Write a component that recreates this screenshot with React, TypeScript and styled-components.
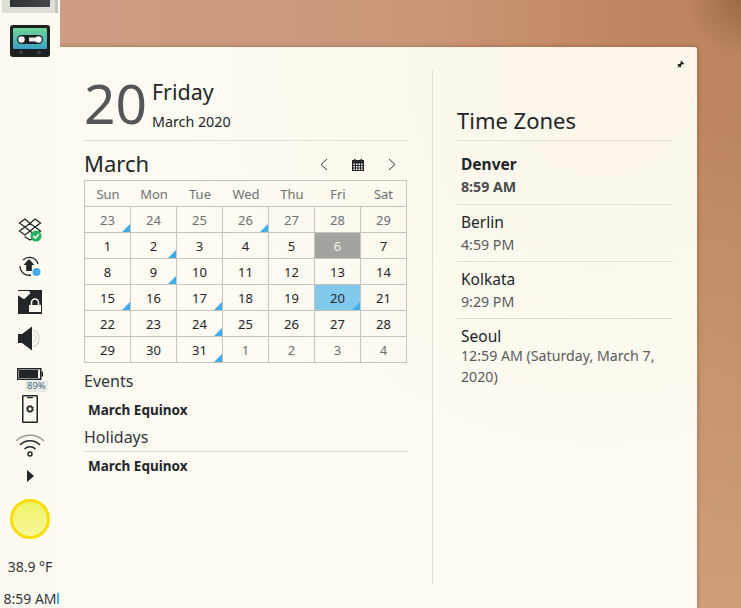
import React from 'react';
import styled, { createGlobalStyle } from 'styled-components';

const Global = createGlobalStyle`
  html, body { margin: 0; padding: 0; height: 100%; overflow: hidden; }
  #root { height: 100%; }
  body { font-family: "Noto Sans", "Liberation Sans", sans-serif; color: #232629; }
`;

const Desktop = styled.div`
  width: 741px;
  height: 608px;
  display: flex;
  overflow: hidden;
  background:
    radial-gradient(circle at 100% 0, #9c6a44 0, rgba(170, 115, 75, 0) 55px),
    linear-gradient(180deg, rgba(226, 180, 145, 0) 90px, rgba(226, 180, 145, 0.55) 100%),
    linear-gradient(90deg, #cf9f86 0%, #cc9779 55%, #bf8661 85%, #bb8460 100%);
`;

const Dock = styled.div`
  width: 60px;
  height: 608px;
  flex: none;
  position: relative;
  z-index: 1;
  background: #fcfaf1;
  display: flex;
  flex-direction: column;
  align-items: center;
`;

const Thumb = styled.div`
  width: 56px;
  height: 13px;
  flex: none;
  box-sizing: border-box;
  background: linear-gradient(90deg, #dfdfd8 0, #dfdfd8 53px, #c3c4c0 53px);
  padding: 0 8px 6px;
  display: flex;
`;

const ThumbScreen = styled.div`
  flex: 1;
  background: linear-gradient(90deg, #2d3238, #43484d);
`;

const Slot = styled.div<{ $top: number; $h: number }>`
  margin-top: ${p => p.$top}px;
  height: ${p => p.$h}px;
  flex: none;
  position: relative;
  display: flex;
  align-items: center;
  justify-content: center;
  svg { display: block; }
`;

const BatteryChip = styled.span`
  position: absolute;
  left: 8px;
  top: 12px;
  padding: 0 2px;
  height: 12px;
  line-height: 12px;
  font-size: 9.5px;
  color: #4a6a80;
  background: #e8ebe6;
  border-radius: 3px;
  white-space: nowrap;
`;

const DockText = styled.div<{ $top: number }>`
  margin-top: ${p => p.$top}px;
  font-size: 14px;
  line-height: 18px;
  color: #31363b;
  white-space: nowrap;
  position: relative;
`;

const ClockMark = styled.i`
  position: absolute;
  right: -2px;
  top: 3px;
  width: 2px;
  height: 11px;
  background: #3daee9;
`;

const Main = styled.div`
  flex: 1;
  padding: 47px 44px 0 0;
  display: flex;
`;

const Panel = styled.div`
  flex: 1;
  height: 561px;
  box-sizing: border-box;
  position: relative;
  background: radial-gradient(circle at 85% 5%, #fcf6ea 0, #fdfbf2 55%);
  border-radius: 0 3px 0 0;
  box-shadow: 0 0 4px rgba(80, 45, 15, 0.45);
  padding: 23px 24px 24px;
  display: flex;
`;

const PinIcon = styled.svg`
  position: absolute;
  top: 13px;
  right: 12px;
`;

const LeftCol = styled.div`
  width: 324px;
  flex: none;
  padding-right: 24px;
  border-right: 1px solid #e1dfd6;
`;

const DateHead = styled.div`
  height: 70px;
  display: flex;
  gap: 5px;
  border-bottom: 1px solid #dfddd4;
`;

const DayNumber = styled.div`
  font-size: 55px;
  line-height: 66px;
  font-weight: 400;
  color: #555657;
`;

const DayText = styled.div`
  display: flex;
  flex-direction: column;
`;

const Weekday = styled.div`
  font-size: 21.5px;
  line-height: 30px;
  margin-top: 7px;
`;

const MonthYear = styled.div`
  font-size: 14.3px;
  line-height: 20px;
  margin-top: 5px;
`;

const CalHead = styled.div`
  height: 39px;
  display: flex;
  align-items: center;
  justify-content: space-between;
`;

const MonthName = styled.div`
  font-size: 22px;
  line-height: 28px;
  margin-top: 4px;
`;

const CalNav = styled.div`
  display: flex;
  align-items: center;
  gap: 24px;
  margin-right: 11px;
  margin-top: 8px;
`;

const Grid = styled.div`
  width: 323px;
  box-sizing: border-box;
  display: grid;
  grid-template-columns: repeat(7, 1fr);
  grid-auto-rows: 26px;
  border: 1px solid #c5c3bb;
  border-width: 1px 0 0 1px;
`;

const HeadCell = styled.div`
  font-size: 13px;
  color: #6f7172;
  display: flex;
  align-items: center;
  justify-content: center;
  border-bottom: 1px solid #c5c3bb;
  &:nth-child(7) { border-right: 1px solid #c5c3bb; }
`;

const DayCell = styled.div<{ $dim?: boolean; $bg?: string; $light?: boolean }>`
  position: relative;
  font-size: 13px;
  display: flex;
  align-items: center;
  justify-content: center;
  border-right: 1px solid #c5c3bb;
  border-bottom: 1px solid #c5c3bb;
  color: ${p => (p.$light ? '#f1f0e6' : p.$dim ? '#6f7172' : '#232629')};
  background: ${p => p.$bg || 'transparent'};
`;

const EventMark = styled.i`
  position: absolute;
  right: 0;
  bottom: 0;
  width: 0;
  height: 0;
  border-style: solid;
  border-width: 0 0 8px 8px;
  border-color: transparent transparent #3daee9 transparent;
`;

const SectionTitle = styled.div<{ $line?: boolean; $top: number }>`
  font-size: 16px;
  line-height: 22px;
  margin-top: ${p => p.$top}px;
  color: #31363b;
  padding-bottom: ${p => (p.$line ? '3px' : '0')};
  border-bottom: ${p => (p.$line ? '1px solid #dfddd4' : 'none')};
`;

const EventName = styled.div<{ $top: number }>`
  font-size: 13.5px;
  font-weight: 700;
  line-height: 20px;
  padding: ${p => p.$top}px 0 0 4px;
`;

const RightCol = styled.div`
  flex: 1;
  padding-left: 24px;
  display: flex;
  flex-direction: column;
`;

const ZoneTitle = styled.div`
  font-size: 22px;
  line-height: 30px;
  margin-top: 35px;
  padding-bottom: 5px;
  border-bottom: 1px solid #dfddd4;
`;

const ZoneRow = styled.div<{ $first?: boolean; $last?: boolean }>`
  padding: ${p => (p.$first ? '12px 4px 5px' : '6px 4px 4px')};
  border-bottom: ${p => (p.$last ? 'none' : '1px solid #dfddd4')};
`;

const ZoneCity = styled.div<{ $bold?: boolean }>`
  font-size: 15.5px;
  line-height: 22px;
  font-weight: ${p => (p.$bold ? 700 : 400)};
`;

const ZoneTime = styled.div<{ $bold?: boolean; $wrap?: boolean }>`
  font-size: 14.2px;
  line-height: ${p => (p.$wrap ? '21px' : '24px')};
  margin-top: ${p => (p.$wrap ? '-2px' : '0')};
  font-weight: ${p => (p.$bold ? 700 : 400)};
  color: ${p => (p.$bold ? '#4a4c4e' : '#5a5b5c')};
`;

const weekdays = ['Sun', 'Mon', 'Tue', 'Wed', 'Thu', 'Fri', 'Sat'];

const days: { n: number; dim?: boolean; ev?: boolean; bg?: string; light?: boolean }[] = [
  { n: 23, dim: true, ev: true }, { n: 24, dim: true }, { n: 25, dim: true }, { n: 26, dim: true, ev: true },
  { n: 27, dim: true }, { n: 28, dim: true }, { n: 29, dim: true },
  { n: 1 }, { n: 2, ev: true }, { n: 3 }, { n: 4 }, { n: 5 }, { n: 6, bg: '#a3a49f', light: true }, { n: 7 },
  { n: 8 }, { n: 9, ev: true }, { n: 10 }, { n: 11 }, { n: 12 }, { n: 13 }, { n: 14 },
  { n: 15, ev: true }, { n: 16 }, { n: 17, ev: true }, { n: 18 }, { n: 19 }, { n: 20, ev: true, bg: '#82c9ee' }, { n: 21 },
  { n: 22 }, { n: 23 }, { n: 24, ev: true }, { n: 25 }, { n: 26 }, { n: 27 }, { n: 28 },
  { n: 29 }, { n: 30 }, { n: 31, ev: true }, { n: 1, dim: true }, { n: 2, dim: true }, { n: 3, dim: true }, { n: 4, dim: true },
];

const zones = [
  { city: 'Denver', time: '8:59 AM', bold: true },
  { city: 'Berlin', time: '4:59 PM' },
  { city: 'Kolkata', time: '9:29 PM' },
  { city: 'Seoul', time: '12:59 AM (Saturday, March 7, 2020)', wrap: true },
];

const Cassette = () => (
  <svg width="40" height="32" viewBox="0 0 40 32">
    <defs>
      <linearGradient id="tape" x1="0" y1="0" x2="0" y2="1">
        <stop offset="0" stopColor="#6fd49c" />
        <stop offset="1" stopColor="#3aa3c4" />
      </linearGradient>
    </defs>
    <rect width="40" height="32" rx="3" fill="#1d1f20" />
    <rect x="3" y="3" width="34" height="21" rx="1" fill="url(#tape)" />
    <rect x="7" y="10" width="26" height="9" rx="4.5" fill="#1d1f20" />
    <circle cx="11.5" cy="14.5" r="3.2" fill="#fff" />
    <circle cx="28.5" cy="14.5" r="3.2" fill="#fff" />
    <rect x="19" y="12.5" width="7" height="4" fill="#eee" />
    <circle cx="11" cy="27.5" r="2" fill="#3a3d3f" />
    <circle cx="29" cy="27.5" r="2" fill="#3a3d3f" />
  </svg>
);

const Dropbox = () => (
  <svg width="24" height="24" viewBox="0 0 24 24" fill="none" stroke="#232629" strokeWidth="1.3">
    <path d="M7 1 L1.5 5 L7 9 L12 5.5 Z M17 1 L22.5 5 L17 9 L12 5.5 Z M7 9 L1.5 13 L7 17 L12 13 Z M17 9 L22.5 13 L17 17 L12 13 Z M6.5 18.5 L12 22 L15 20" />
    <circle cx="18" cy="18" r="5.5" fill="#27ae60" stroke="none" />
    <path d="M15.3 18 L17.4 20 L20.8 16.2" stroke="#fff" strokeWidth="1.6" />
  </svg>
);

const SyncIcon = () => (
  <svg width="26" height="24" viewBox="0 0 26 24">
    <path d="M21 10 A9 9 0 0 0 6 6 M3 12 A9 9 0 0 0 14 21" fill="none" stroke="#232629" strokeWidth="1.3" />
    <path d="M12 5 L17.5 11 L14.8 11 L14.8 17 L9.2 17 L9.2 11 L6.5 11 Z" fill="#232629" />
    <circle cx="19.5" cy="18" r="4" fill="#3daee9" />
  </svg>
);

const LockIcon = () => (
  <svg width="24" height="24" viewBox="0 0 24 24">
    <path d="M0 0 H24 V24 H0 Z" fill="#232629" />
    <path d="M0 1 H11 L12.5 3.3 L6 9.3 L0 5.3 Z" fill="#fcfaf1" />
    <path d="M13.5 16 V12.5 A3.5 3.5 0 0 1 20.5 12.5 V16" fill="none" stroke="#fcfaf1" strokeWidth="1.6" />
    <rect x="11" y="15" width="12" height="7" fill="#fcfaf1" />
  </svg>
);

const Speaker = () => (
  <svg width="24" height="25" viewBox="0 0 24 25">
    <path d="M0 8 H4 L14 0.5 V24.5 L4 17 H0 Z" fill="#232629" />
    <path d="M15 4 A9 9 0 0 1 15 21" fill="none" stroke="#cfcfca" strokeWidth="1.2" />
    <path d="M15 8 A5 5 0 0 1 15 17" fill="none" stroke="#cfcfca" strokeWidth="1" />
  </svg>
);

const Battery = () => (
  <svg width="26" height="12" viewBox="0 0 26 12">
    <rect x="0.75" y="0.75" width="23" height="10.5" fill="none" stroke="#232629" strokeWidth="1.5" />
    <rect x="2" y="2" width="19" height="8" fill="#232629" />
    <rect x="24.5" y="3.5" width="1.5" height="5" fill="#232629" />
  </svg>
);

const Phone = () => (
  <svg width="16" height="28" viewBox="0 0 16 28">
    <rect x="0.75" y="0.75" width="14.5" height="26.5" rx="0.5" fill="none" stroke="#232629" strokeWidth="1.5" />
    <rect x="5" y="2" width="6" height="1.2" fill="#232629" />
    <circle cx="8" cy="14" r="2.4" fill="none" stroke="#232629" strokeWidth="1.5" />
    <circle cx="8" cy="14" r="3.6" fill="none" stroke="#232629" strokeWidth="1" strokeDasharray="1.4 1.4" />
  </svg>
);

const Wifi = () => (
  <svg width="30" height="25" viewBox="0 0 30 25" fill="none">
    <path d="M1 8 A20 20 0 0 1 29 8" stroke="#9a9a96" strokeWidth="1.4" />
    <path d="M5 12 A14 14 0 0 1 25 12" stroke="#232629" strokeWidth="1.5" />
    <path d="M9.5 16 A8 8 0 0 1 20.5 16" stroke="#232629" strokeWidth="1.5" />
    <circle cx="15" cy="21" r="2" stroke="#232629" strokeWidth="1.5" />
  </svg>
);

const Arrow = () => (
  <svg width="7" height="12" viewBox="0 0 7 12">
    <path d="M0 0 L7 6 L0 12 Z" fill="#232629" />
  </svg>
);

const Sun = () => (
  <svg width="40" height="40" viewBox="0 0 40 40">
    <defs>
      <linearGradient id="sun" x1="0" y1="0" x2="0" y2="1">
        <stop offset="0" stopColor="#eef264" />
        <stop offset="1" stopColor="#f7f89a" />
      </linearGradient>
    </defs>
    <circle cx="20" cy="20" r="18.5" fill="url(#sun)" stroke="#f9dc00" strokeWidth="3" />
  </svg>
);

const Chevron = ({ left }: { left?: boolean }) => (
  <svg width="9" height="13" viewBox="0 0 9 13" fill="none" stroke="#31363b" strokeWidth="1">
    <path d={left ? 'M8 1 L2 6.5 L8 12' : 'M1 1 L7 6.5 L1 12'} />
  </svg>
);

const CalendarIcon = () => (
  <svg width="12" height="12" viewBox="0 0 12 12">
    <path d="M0 1 H2 V0 H3.5 V1 H8.5 V0 H10 V1 H12 V12 H0 Z" fill="#232629" />
    <g fill="#fdfbf2">
      {[4.5, 7, 9.5].flatMap(y => [1.5, 4, 6.5, 9].map(x => <rect key={`${x}-${y}`} x={x} y={y} width="1.5" height="1.5" />))}
    </g>
  </svg>
);

const App: React.FC = () => (
  <Desktop>
    <Global />
    <Dock>
      <Thumb><ThumbScreen /></Thumb>
      <Slot $top={12} $h={32}><Cassette /></Slot>
      <Slot $top={161} $h={24}><Dropbox /></Slot>
      <Slot $top={12} $h={24}><SyncIcon /></Slot>
      <Slot $top={12} $h={24}><LockIcon /></Slot>
      <Slot $top={12} $h={25}><Speaker /></Slot>
      <Slot $top={17} $h={12}><Battery /><BatteryChip>89%</BatteryChip></Slot>
      <Slot $top={15} $h={28}><Phone /></Slot>
      <Slot $top={10} $h={25}><Wifi /></Slot>
      <Slot $top={12} $h={12}><Arrow /></Slot>
      <Slot $top={17} $h={40}><Sun /></Slot>
      <DockText $top={19}>38.9 °F</DockText>
      <DockText $top={14}>8:59 AM<ClockMark /></DockText>
    </Dock>
    <Main>
      <Panel>
        <PinIcon width="9" height="9" viewBox="0 0 9 9">
          <path d="M5 0.5 L8.5 4 L7.5 4.5 L6.5 4 L5 5.5 L5 7 L4 7.5 L1.5 5 L2 4 L3.5 4 L5 2.5 L4.5 1.5 Z M2.5 6 L0.5 8.5 L3 6.5 Z" fill="#232629" />
        </PinIcon>
        <LeftCol>
          <DateHead>
            <DayNumber>20</DayNumber>
            <DayText>
              <Weekday>Friday</Weekday>
              <MonthYear>March 2020</MonthYear>
            </DayText>
          </DateHead>
          <CalHead>
            <MonthName>March</MonthName>
            <CalNav>
              <Chevron left />
              <CalendarIcon />
              <Chevron />
            </CalNav>
          </CalHead>
          <Grid>
            {weekdays.map(d => <HeadCell key={d}>{d}</HeadCell>)}
            {days.map((d, i) => (
              <DayCell key={i} $dim={d.dim} $bg={d.bg} $light={d.light}>
                {d.n}
                {d.ev && <EventMark />}
              </DayCell>
            ))}
          </Grid>
          <SectionTitle $top={7}>Events</SectionTitle>
          <EventName $top={8}>March Equinox</EventName>
          <SectionTitle $line $top={6}>Holidays</SectionTitle>
          <EventName $top={4}>March Equinox</EventName>
        </LeftCol>
        <RightCol>
          <ZoneTitle>Time Zones</ZoneTitle>
          {zones.map((z, i) => (
            <ZoneRow key={z.city} $first={i === 0} $last={i === zones.length - 1}>
              <ZoneCity $bold={z.bold}>{z.city}</ZoneCity>
              <ZoneTime $bold={z.bold} $wrap={z.wrap}>{z.time}</ZoneTime>
            </ZoneRow>
          ))}
        </RightCol>
      </Panel>
    </Main>
  </Desktop>
);

export default App;
